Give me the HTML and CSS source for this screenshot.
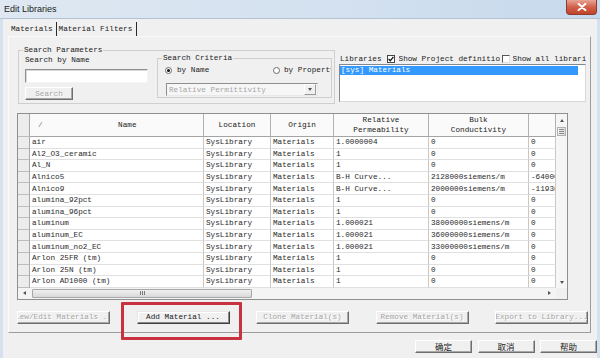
FILE: index.html
```html
<!DOCTYPE html>
<html lang="en">
<head>
    <meta charset="UTF-8">
    <title>Edit Libraries</title>
    <link rel="stylesheet" href="styles.css">
</head>
<body>

<div class="titlebar">
    <span class="title">Edit Libraries</span>
    <span class="close">
        <svg width="10" height="8" viewBox="0 0 10 8"><path d="M1.5 0.8 L8.5 7.2 M8.5 0.8 L1.5 7.2" stroke="#fff" stroke-width="1.9" stroke-linecap="round"/></svg>
    </span>
</div>

<div class="frame">
    <div class="tabs">
        <span class="tab">Materials</span>
        <span class="tab">Material Filters</span>
    </div>

    <div class="panel">
        <div class="top-row">
            <fieldset class="search-params">
                <legend>Search Parameters</legend>
                <div class="by-name">
                    <div class="label">Search by Name</div>
                    <input type="text" class="name-input">
                    <button class="btn search-btn" disabled>Search</button>
                </div>
                <fieldset class="criteria">
                    <legend>Search Criteria</legend>
                    <div class="radios">
                        <span class="option first"><span class="radio on"></span>by Name</span>
                        <span class="option"><span class="radio"></span>by Property</span>
                    </div>
                    <div class="select">
                        <span class="select-text">Relative Permittivity</span>
                        <span class="select-arrow"><span class="tri-down"></span></span>
                    </div>
                </fieldset>
            </fieldset>

            <div class="libraries">
                <div class="lib-head">
                    <span>Libraries</span>
                    <span class="check first">
                        <svg width="6" height="6" viewBox="0 0 6 6"><path d="M0.6 3 L2.3 4.8 L5.4 0.8" stroke="#111" stroke-width="1.3" fill="none"/></svg>
                    </span>
                    <span class="lib-opt opt-project">Show Project definitions</span>
                    <span class="check second"></span>
                    <span class="lib-opt opt-all">Show all libraries</span>
                </div>
                <div class="listbox">
                    <div class="list-item selected">[sys] Materials</div>
                </div>
            </div>
        </div>

        <div class="grid">
            <div class="grid-main">
                <table class="mat-table">
                    <colgroup>
                        <col class="c-hdr"><col class="c-name"><col class="c-loc"><col class="c-origin"><col class="c-perm"><col class="c-cond"><col class="c-last">
                    </colgroup>
                    <thead>
                        <tr>
                            <th class="rh"></th>
                            <th><div class="name-head"><span class="sort">/</span><span class="name-label">Name</span></div></th>
                            <th>Location</th>
                            <th>Origin</th>
                            <th>Relative<br>Permeability</th>
                            <th>Bulk<br>Conductivity</th>
                            <th></th>
                        </tr>
                    </thead>
                    <tbody>
                        <tr><td class="rh"></td><td>air</td><td>SysLibrary</td><td>Materials</td><td>1.0000004</td><td>0</td><td>0</td></tr>
                        <tr><td class="rh"></td><td>Al2_O3_ceramic</td><td>SysLibrary</td><td>Materials</td><td>1</td><td>0</td><td>0</td></tr>
                        <tr><td class="rh"></td><td>Al_N</td><td>SysLibrary</td><td>Materials</td><td>1</td><td>0</td><td>0</td></tr>
                        <tr><td class="rh"></td><td>Alnico5</td><td>SysLibrary</td><td>Materials</td><td>B-H Curve...</td><td>2128000siemens/m</td><td>-640000</td></tr>
                        <tr><td class="rh"></td><td>Alnico9</td><td>SysLibrary</td><td>Materials</td><td>B-H Curve...</td><td>2000000siemens/m</td><td>-1193662</td></tr>
                        <tr><td class="rh"></td><td>alumina_92pct</td><td>SysLibrary</td><td>Materials</td><td>1</td><td>0</td><td>0</td></tr>
                        <tr><td class="rh"></td><td>alumina_96pct</td><td>SysLibrary</td><td>Materials</td><td>1</td><td>0</td><td>0</td></tr>
                        <tr><td class="rh"></td><td>aluminum</td><td>SysLibrary</td><td>Materials</td><td>1.000021</td><td>38000000siemens/m</td><td>0</td></tr>
                        <tr><td class="rh"></td><td>aluminum_EC</td><td>SysLibrary</td><td>Materials</td><td>1.000021</td><td>36000000siemens/m</td><td>0</td></tr>
                        <tr><td class="rh"></td><td>aluminum_no2_EC</td><td>SysLibrary</td><td>Materials</td><td>1.000021</td><td>33000000siemens/m</td><td>0</td></tr>
                        <tr><td class="rh"></td><td>Arlon 25FR (tm)</td><td>SysLibrary</td><td>Materials</td><td>1</td><td>0</td><td>0</td></tr>
                        <tr><td class="rh"></td><td>Arlon 25N (tm)</td><td>SysLibrary</td><td>Materials</td><td>1</td><td>0</td><td>0</td></tr>
                        <tr><td class="rh"></td><td>Arlon AD1000 (tm)</td><td>SysLibrary</td><td>Materials</td><td>1</td><td>0</td><td>0</td></tr>
                    </tbody>
                </table>
                <div class="vscroll">
                    <div class="vs-up"><span class="tri-up"></span></div>
                    <div class="vs-thumb"><span class="grip-h"></span></div>
                    <div class="vs-track"></div>
                    <div class="vs-down"><span class="tri-down"></span></div>
                </div>
            </div>
            <div class="hscroll-row">
                <div class="hscroll">
                    <div class="hs-left"><span class="tri-left"></span></div>
                    <div class="hs-thumb"><span class="grip-v"></span></div>
                    <div class="hs-track"></div>
                    <div class="hs-right"><span class="tri-right"></span></div>
                </div>
                <div class="corner"></div>
            </div>
        </div>

        <div class="actions">
            <button class="btn act" disabled>View/Edit Materials ...</button>
            <button class="btn act default">Add Material ...</button>
            <button class="btn act" disabled>Clone Material(s)</button>
            <button class="btn act" disabled>Remove Material(s)</button>
            <button class="btn act" disabled>Export to Library...</button>
        </div>
    </div>

    <div class="dialog-buttons">
        <button class="btn dlg">确定</button>
        <button class="btn dlg">取消</button>
        <button class="btn dlg">帮助</button>
    </div>
</div>

<div class="highlight"></div>

</body>
</html>
```

FILE: styles.css
```css
* {
    box-sizing: border-box;
}

body {
    margin: 0;
    width: 600px;
    height: 358px;
    overflow: hidden;
    position: relative;
    background: #f0f0f0;
    font-family: "Liberation Mono", "DejaVu Sans Mono", monospace;
    font-size: 7.7px;
    color: #222;
}

/* Title bar */
.titlebar {
    height: 19px;
    display: flex;
    justify-content: space-between;
    align-items: flex-start;
    background: linear-gradient(to right, #dfe8f2, #d2e0ef 60%, #c7d9ed);
    border-bottom: 1px solid #b3c3d5;
}

.title {
    font-family: "Liberation Sans", Arial, sans-serif;
    font-size: 9px;
    line-height: 18px;
    padding-left: 4px;
    color: #1b1b1b;
}

.close {
    width: 31px;
    height: 15px;
    margin-right: 3px;
    display: flex;
    align-items: center;
    justify-content: center;
    border: 1px solid #8c3b2f;
    border-top: none;
    border-radius: 0 0 4px 4px;
    background: linear-gradient(to bottom, #e8a596, #d2604a 50%, #c1432d);
}

/* Dialog body */
.frame {
    height: 339px;
    border-left: 3px solid #d5e1ee;
    border-right: 3px solid #d5e1ee;
    padding-top: 3px;
}

.tabs {
    display: flex;
    height: 14px;
    padding-left: 5px;
}

.tab {
    line-height: 14px;
    padding: 0 3px;
    border-right: 1px solid #2a2a2a;
}

.tab + .tab {
    padding: 0 4px 0 2px;
}

.panel {
    margin: 0 6px 0 5px;
    padding: 8px 0 8px;
    border: 1px solid;
    border-color: #fbfbfb #9c9c9c #9c9c9c #fbfbfb;
}

/* Search area */
.top-row {
    display: flex;
    align-items: flex-start;
    height: 59px;
}

fieldset {
    margin: 0;
    min-width: 0;
    border: 1px solid #cfcfcf;
}

legend {
    padding: 0 1px;
    line-height: 10px;
}

.search-params {
    margin-left: 9px;
    width: 317px;
    padding: 0 2px 3px 6px;
    display: flex;
    align-items: flex-start;
}

.search-params > legend {
    margin-left: -2px;
}

.by-name {
    width: 123px;
    display: flex;
    flex-direction: column;
}

.label {
    line-height: 10px;
}

.name-input {
    margin: 4px 0 0;
    width: 123px;
    height: 14px;
    padding: 0;
    border: 1px solid;
    border-color: #8e8e8e #f4f4f4 #f4f4f4 #8e8e8e;
    box-shadow: inset 1px 1px 0 #d9d9d9;
    background: #fff;
}

.criteria {
    margin: -2px 0 0 9px;
    width: 175px;
    padding: 0 7px 1px 7px;
}

.criteria > legend {
    margin-left: -3px;
}

.radios {
    margin-top: 2px;
    width: 166px;
    height: 10px;
    display: flex;
    align-items: center;
    overflow: hidden;
    white-space: nowrap;
}

.option {
    display: flex;
    align-items: center;
    gap: 4px;
    flex-shrink: 0;
}

.option.first {
    width: 108px;
    gap: 5px;
}

.radio {
    width: 7px;
    height: 7px;
    border-radius: 50%;
    border: 1px solid #6b6b6b;
    background: #fff;
    display: flex;
    align-items: center;
    justify-content: center;
}

.radio.on::after {
    content: "";
    width: 3px;
    height: 3px;
    border-radius: 50%;
    background: #111;
}

.select {
    margin: 8px 0 0 1px;
    width: 152px;
    height: 13px;
    display: flex;
    align-items: center;
    border: 1px solid;
    border-color: #8e8e8e #e8e8e8 #e8e8e8 #8e8e8e;
    background: #f6f6f6;
    color: #a6a6a6;
}

.select-text {
    flex: 1;
    padding-left: 2px;
    white-space: nowrap;
    overflow: hidden;
}

.select-arrow {
    width: 12px;
    height: 11px;
    margin-right: 1px;
    display: flex;
    align-items: center;
    justify-content: center;
    border: 1px solid;
    border-color: #fff #9a9a9a #9a9a9a #fff;
    background: #f0f0f0;
}

/* Libraries */
.libraries {
    margin: 9px 0 0 4px;
    width: 247px;
}

.lib-head {
    height: 10px;
    display: flex;
    align-items: center;
    white-space: nowrap;
    padding-left: 1px;
}

.check {
    width: 8px;
    height: 8px;
    flex-shrink: 0;
    border: 1px solid #444;
    background: #fff;
    display: flex;
    align-items: center;
    justify-content: center;
}

.check.first {
    margin: 0 4px 0 5px;
}

.check.second {
    border-color: #555 #e0e0e0 #e0e0e0 #555;
    margin: 0 3px 0 2px;
}

.lib-opt {
    overflow: hidden;
    line-height: 10px;
}

.opt-project {
    width: 101px;
}

.opt-all {
    width: 73px;
}

.listbox {
    height: 38px;
    padding: 1px 7px 0 0;
    border: 1px solid;
    border-color: #828790 #d8d8d8 #d8d8d8 #828790;
    background: #fff;
}

.list-item {
    line-height: 9px;
    padding-left: 1px;
}

.list-item.selected {
    background: #3399ff;
    color: #fff;
}

/* Materials grid */
.grid {
    margin: 9px 0 0 8px;
    width: 551px;
    border: 1px solid #8f8f8f;
    background: #fff;
}

.grid-main {
    display: flex;
}

.mat-table {
    width: 538px;
    table-layout: fixed;
    border-collapse: separate;
    border-spacing: 0;
}

.c-hdr { width: 12px; }
.c-name { width: 174px; }
.c-loc { width: 67px; }
.c-origin { width: 63px; }
.c-perm { width: 95px; }
.c-cond { width: 100px; }
.c-last { width: 27px; }

.mat-table th {
    height: 23px;
    padding: 0;
    font-weight: normal;
    line-height: 10px;
    text-align: center;
    background: #fafafa;
    border-right: 1px solid #b2b2b2;
    border-bottom: 1px solid #a4a4a4;
    overflow: hidden;
}

.mat-table tbody tr {
    height: 11.6px;
}

.mat-table td {
    padding: 0 0 0 2px;
    line-height: 10px;
    white-space: nowrap;
    overflow: hidden;
    border-right: 1px solid #c8c8c8;
    border-bottom: 1px solid #e0e0e0;
    color: #2a2a2a;
}

.mat-table .rh {
    background: #ececec;
    border-right: 1px solid #a8a8a8;
    border-bottom: 1px solid #bdbdbd;
}

.name-head {
    display: flex;
}

.sort {
    margin-left: 8px;
    color: #777;
}

.name-label {
    flex: 1;
    padding-left: 9px;
    text-align: center;
}

.vscroll {
    width: 11px;
    display: flex;
    flex-direction: column;
    background: #f6f6f6;
}

.vs-up {
    height: 12px;
    display: flex;
    align-items: center;
    justify-content: center;
}

.vs-thumb {
    height: 9px;
    margin: 1px 1px 0;
    border: 1px solid #b0b0b0;
    background: linear-gradient(to right, #f2f2f2, #dedede);
    display: flex;
    align-items: center;
    justify-content: center;
}

.grip-h {
    width: 5px;
    height: 5px;
    background: repeating-linear-gradient(to bottom, #8a8a8a 0 1px, transparent 1px 2px);
}

.vs-track {
    flex: 1;
}

.vs-down {
    height: 11px;
    display: flex;
    align-items: center;
    justify-content: center;
}

.hscroll-row {
    display: flex;
    height: 11px;
}

.hscroll {
    width: 538px;
    display: flex;
    align-items: center;
    background: #f4f4f4;
}

.hs-left {
    width: 12px;
    display: flex;
    justify-content: center;
}

.hs-thumb {
    margin-left: 2px;
    width: 220px;
    height: 9px;
    border: 1px solid #a8a8a8;
    border-radius: 1px;
    background: linear-gradient(to bottom, #f0f0f0, #d9d9d9);
    display: flex;
    align-items: center;
    justify-content: center;
}

.grip-v {
    width: 5px;
    height: 4px;
    background: repeating-linear-gradient(to right, #7a7a7a 0 1px, transparent 1px 2px);
}

.hs-track {
    flex: 1;
}

.hs-right {
    width: 14px;
    display: flex;
    justify-content: center;
}

.corner {
    width: 11px;
    background: #f0f0f0;
}

.tri-up, .tri-down, .tri-left, .tri-right {
    width: 0;
    height: 0;
    border: 2.5px solid transparent;
}

.tri-up { border-bottom: 3px solid #555; border-top: 0; }
.tri-down { border-top: 3px solid #555; border-bottom: 0; }
.tri-left { border-right: 3px solid #555; border-left: 0; }
.tri-right { border-left: 3px solid #555; border-right: 0; }

/* Buttons */
.btn {
    font: inherit;
    padding: 0;
    height: 13px;
    display: flex;
    align-items: center;
    justify-content: center;
    white-space: nowrap;
    overflow: hidden;
    color: #1a1a1a;
    background: #f0f0f0;
    border: 1px solid;
    border-color: #fff #6e6e6e #6e6e6e #fff;
    box-shadow: inset -1px -1px 0 #a8a8a8;
    border-radius: 0;
}

.btn:disabled {
    color: #a6a6a6;
    text-shadow: 1px 1px 0 #fff;
}

.search-btn {
    margin-top: 4px;
    width: 48px;
}

.actions {
    display: flex;
    gap: 26.5px;
    margin: 11px 0 0 8px;
}

.act {
    width: 93px;
    flex-shrink: 0;
}

.act.default {
    border-color: #e8e8e8 #404040 #404040 #e8e8e8;
    box-shadow: inset -1px -1px 0 #8a8a8a, inset 1px 1px 0 #fff;
}

.dialog-buttons {
    display: flex;
    justify-content: flex-end;
    gap: 5.5px;
    margin-top: 7px;
}

.dlg {
    width: 57px;
    font-family: "Noto Sans CJK SC", sans-serif;
    font-size: 8.5px;
    line-height: 1;
}

/* Red annotation frame */
.highlight {
    position: absolute;
    left: 121px;
    top: 302px;
    width: 121px;
    height: 38px;
    border: 3px solid #c8323e;
    border-radius: 1px;
}
```
